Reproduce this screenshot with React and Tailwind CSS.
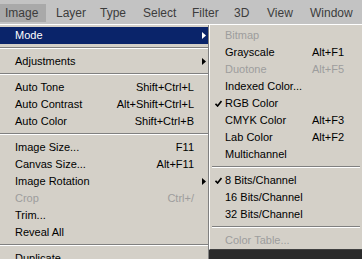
import React from "react";

const Arrow = ({ white }) => (
  <svg width="4" height="7" viewBox="0 0 4 7" className="block">
    <path d="M0 0 L4 3.5 L0 7 Z" fill={white ? "#ffffff" : "#000000"} />
  </svg>
);

const Check = () => (
  <svg width="7" height="7" viewBox="0 0 7 7" className="block">
    <path d="M0.5 3.8 L2.6 6 L6.5 1" stroke="#000" strokeWidth="1.6" fill="none" />
  </svg>
);

function MainItem({ label, shortcut, arrow, active, disabled }) {
  const color = active ? "text-white bg-[#0a246a]" : disabled ? "text-[#9d9d9d]" : "text-black";
  return (
    <div className={`flex h-[17px] items-center leading-[17px] ${color}`}>
      <div className="flex-1 pl-[15px] whitespace-nowrap">{label}</div>
      {shortcut && <div className="whitespace-nowrap">{shortcut}</div>}
      <div className="w-[14px] flex justify-start pl-[8px]">{arrow && <Arrow white={active} />}</div>
    </div>
  );
}

function Sep({ className = "" }) {
  return (
    <div className={`h-[9px] pt-[3px] ${className}`}>
      <div className="h-px bg-[#808080]" />
      <div className="h-px bg-white" />
    </div>
  );
}

function SubItem({ label, shortcut, checked, disabled }) {
  const color = disabled ? "text-[#9d9d9d]" : "text-black";
  return (
    <div className={`flex h-[17px] items-center leading-[17px] ${color}`}>
      <div className="w-[15px] flex justify-center pl-[2px]">{checked && <Check />}</div>
      <div className="w-[87px] whitespace-nowrap">{label}</div>
      {shortcut && <div className="whitespace-nowrap">{shortcut}</div>}
    </div>
  );
}

export default function App() {
  return (
    <div className="w-[362px] h-[259px] overflow-hidden bg-[#d4d0c8] font-['Liberation_Sans',Arial,sans-serif]">
      <div className="h-[24px] bg-[#c3c3c3] flex text-[12px] text-[#3c3c3c] leading-[18px]">
        <div className="mt-[4px] h-[18px] w-[46px] pl-[5px] bg-[#a9a9a9]">Image</div>
        <div className="mt-[4px] ml-[10px] w-[44px]">Layer</div>
        <div className="mt-[4px] w-[43px]">Type</div>
        <div className="mt-[4px] w-[49px]">Select</div>
        <div className="mt-[4px] w-[42px]">Filter</div>
        <div className="mt-[4px] w-[33px]">3D</div>
        <div className="mt-[4px] w-[43px]">View</div>
        <div className="mt-[4px]">Window</div>
      </div>
      <div className="h-px bg-white" />
      <div className="flex h-[234px] overflow-hidden text-[11px]">
        <div className="w-[209px] shrink-0 border-r border-[#808080] pt-[2px]">
          <MainItem label="Mode" arrow active />
          <Sep />
          <MainItem label="Adjustments" arrow />
          <Sep />
          <MainItem label="Auto Tone" shortcut="Shift+Ctrl+L" />
          <MainItem label="Auto Contrast" shortcut="Alt+Shift+Ctrl+L" />
          <MainItem label="Auto Color" shortcut="Shift+Ctrl+B" />
          <Sep />
          <MainItem label="Image Size..." shortcut="F11" />
          <MainItem label="Canvas Size..." shortcut="Alt+F11" />
          <MainItem label="Image Rotation" arrow />
          <MainItem label="Crop" shortcut="Ctrl+/" disabled />
          <MainItem label="Trim..." />
          <MainItem label="Reveal All" />
          <Sep />
          <MainItem label="Duplicate" />
        </div>
        <div className="flex-1 flex flex-col">
          <div className="border-l border-white border-b border-b-[#404040] pt-[2px]">
            <SubItem label="Bitmap" disabled />
            <SubItem label="Grayscale" shortcut="Alt+F1" />
            <SubItem label="Duotone" shortcut="Alt+F5" disabled />
            <SubItem label="Indexed Color..." />
            <SubItem label="RGB Color" checked />
            <SubItem label="CMYK Color" shortcut="Alt+F3" />
            <SubItem label="Lab Color" shortcut="Alt+F2" />
            <SubItem label="Multichannel" />
            <Sep className="px-[2px]" />
            <SubItem label="8 Bits/Channel" checked />
            <SubItem label="16 Bits/Channel" />
            <SubItem label="32 Bits/Channel" />
            <Sep className="px-[2px]" />
            <SubItem label="Color Table..." disabled />
          </div>
          <div className="flex-1 bg-[#2b2b2b]" />
        </div>
      </div>
    </div>
  );
}
